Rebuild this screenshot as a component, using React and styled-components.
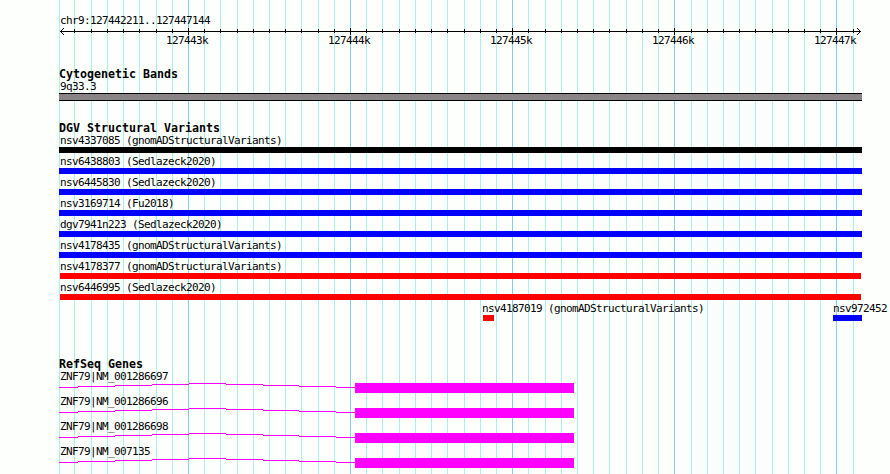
import React from 'react'
import styled, { createGlobalStyle } from 'styled-components'

const GlobalStyle = createGlobalStyle`
  body {
    margin: 0;
    background-color: #FDFFFC;
  }
`

const Browser = styled.div`
  position: relative;
  width: 890px;
  height: 474px;
  overflow: hidden;
  background-color: #FDFFFC;
  color: #000000;
  font-family: "DejaVu Sans Mono", monospace;
  font-size: 11px;
`

const GridLines = styled.svg`
  position: absolute;
  top: 0;
  left: 0;
`

const Content = styled.div`
  position: relative;
  display: flex;
  flex-direction: column;
  padding: 15px 0 0 59px;
`

const Label = styled.div`
  height: 12px;
  padding-left: 1px;
  line-height: 12px;
  letter-spacing: -0.622px;
  white-space: pre;
`

const Title = styled.h2`
  height: 13px;
  margin: 0;
  font-size: 11.63px;
  font-weight: bold;
  line-height: 13px;
  white-space: pre;
`

const Axis = styled.svg`
  display: block;
  width: 803px;
  height: 8px;
`

const Scale = styled.div`
  display: flex;
  gap: 119px;
  padding-left: 106px;
`

const Track = styled.section`
  display: flex;
  flex-direction: column;
  margin-top: ${({ $top }) => $top}px;
`

const Band = styled.div`
  box-sizing: border-box;
  width: 803px;
  height: 8px;
  background-color: #888488;
  border-top: 1px solid #000000;
  border-bottom: 1px solid #000000;
`

const VariantRow = styled.div`
  display: flex;
  height: 21px;
`

const Variant = styled.div`
  flex: none;
  width: ${({ $width }) => $width}px;
  margin-left: ${({ $offset }) => $offset}px;
`

const Bar = styled.div`
  width: ${({ $width }) => $width}px;
  height: 6px;
  margin-left: ${({ $inset }) => $inset || 0}px;
  background-color: ${({ $color }) => $color};
`

const Gene = styled.div`
  height: 25px;
`

const Transcript = styled.div`
  display: flex;
`

const Intron = styled.svg`
  flex: none;
  display: block;
`

const Exon = styled.div`
  width: 219px;
  height: 10px;
  background-color: #FF00FF;
`

const minor = [
  59, 74, 91, 107, 123, 139, 156, 172, 204, 220, 237, 253, 269, 285, 301, 318,
  334, 366, 382, 399, 415, 431, 447, 464, 480, 496, 528, 545, 561, 577, 593,
  609, 626, 642, 658, 691, 707, 723, 739, 755, 772, 788, 804, 820, 853,
]
const major = [188, 350, 512, 674, 836]

const variants = [
  { name: 'nsv4337085 (gnomADStructuralVariants)', color: '#000000', inset: 0, width: 803 },
  { name: 'nsv6438803 (Sedlazeck2020)', color: '#0000FF', inset: 0, width: 803 },
  { name: 'nsv6445830 (Sedlazeck2020)', color: '#0000FF', inset: 0, width: 803 },
  { name: 'nsv3169714 (Fu2018)', color: '#0000FF', inset: 0, width: 803 },
  { name: 'dgv7941n223 (Sedlazeck2020)', color: '#0000FF', inset: 0, width: 803 },
  { name: 'nsv4178435 (gnomADStructuralVariants)', color: '#0000FF', inset: 0, width: 803 },
  { name: 'nsv4178377 (gnomADStructuralVariants)', color: '#FF0000', inset: 1, width: 801 },
  { name: 'nsv6446995 (Sedlazeck2020)', color: '#FF0000', inset: 1, width: 801 },
]

const genes = ['NM_001286697', 'NM_001286696', 'NM_001286698', 'NM_007135']

// x, y and length of each step of the intron line
const intronSteps = [
  [0, 4, 19], [19, 3, 37], [56, 2, 37], [93, 1, 37], [130, 0, 37],
  [167, 1, 37], [204, 2, 36], [240, 3, 37], [277, 4, 19],
]

const Grid = () => (
  <GridLines width="890" height="474" shapeRendering="crispEdges">
    {minor.map((x) => <rect key={x} x={x} y="0" width="1" height="474" fill="#AFEEEE" />)}
    {major.map((x) => <rect key={x} x={x} y="0" width="1" height="474" fill="#87CEEB" />)}
  </GridLines>
)

const Ruler = () => (
  <>
    <Label>chr9:127442211..127447144</Label>
    <Axis viewBox="0 0 803 8" shapeRendering="crispEdges">
      <rect x="1" y="4" width="801" height="1" />
      {minor.slice(1).map((x) => <rect key={x} x={x - 59} y="2" width="1" height="4" />)}
      {major.map((x) => <rect key={x} x={x - 59} y="1" width="1" height="7" />)}
      {[1, 2, 3].map((n) => (
        <g key={n}>
          <rect x={1 + n} y={4 - n} width="1" height="1" />
          <rect x={1 + n} y={4 + n} width="1" height="1" />
          <rect x={801 - n} y={4 - n} width="1" height="1" />
          <rect x={801 - n} y={4 + n} width="1" height="1" />
        </g>
      ))}
    </Axis>
    <Scale>
      {['127443k', '127444k', '127445k', '127446k', '127447k'].map((t) => <Label key={t}>{t}</Label>)}
    </Scale>
  </>
)

const App = () => {
  return (
    <>
      <GlobalStyle />
      <Browser>
        <Grid />
        <Content>
          <Ruler />

          <Track $top={21}>
            <Title>Cytogenetic Bands</Title>
            <Label>9q33.3</Label>
            <Band />
          </Track>

          <Track $top={21}>
            <Title>DGV Structural Variants</Title>
            {variants.map((v) => (
              <VariantRow key={v.name}>
                <Variant $width={803} $offset={0}>
                  <Label>{v.name}</Label>
                  <Bar $color={v.color} $width={v.width} $inset={v.inset} />
                </Variant>
              </VariantRow>
            ))}
            <VariantRow>
              <Variant $width={230} $offset={422}>
                <Label>nsv4187019 (gnomADStructuralVariants)</Label>
                <Bar $color="#FF0000" $width={11} $inset={2} />
              </Variant>
              <Variant $width={57} $offset={121}>
                <Label>nsv972452</Label>
                <Bar $color="#0000FF" $width={29} $inset={1} />
              </Variant>
            </VariantRow>
          </Track>

          <Track $top={34}>
            <Title>RefSeq Genes</Title>
            {genes.map((name) => (
              <Gene key={name}>
                <Label>ZNF79|{name}</Label>
                <Transcript>
                  <Intron width="296" height="10" shapeRendering="crispEdges">
                    {intronSteps.map(([x, y, w]) => (
                      <rect key={x} x={x} y={y} width={w} height="1" fill="#FF00FF" />
                    ))}
                  </Intron>
                  <Exon />
                </Transcript>
              </Gene>
            ))}
          </Track>
        </Content>
      </Browser>
    </>
  )
}

export default App
